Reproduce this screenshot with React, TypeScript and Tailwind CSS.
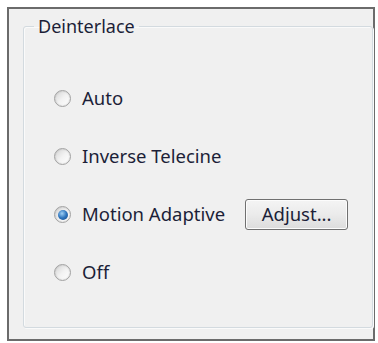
import React from "react";

function Radio({ checked }: { checked?: boolean }) {
  return (
    <div className="w-[17px] h-[17px] rounded-full border border-[#a2a2a2] bg-gradient-to-br from-[#d4d4d4] via-[#f2f2f2] to-[#ffffff] flex items-center justify-center shrink-0 shadow-[inset_0_0_2px_rgba(0,0,0,0.18)]">
      {checked && (
        <div className="w-[10px] h-[10px] rounded-full bg-[radial-gradient(circle_at_40%_35%,#9fd0f5_0%,#2d74bd_50%,#154785_100%)]" />
      )}
    </div>
  );
}

function Row({ label, checked, children }: { label: string; checked?: boolean; children?: React.ReactNode }) {
  return (
    <div className="h-[31px] flex items-center">
      <Radio checked={checked} />
      <span className="ml-[11px] text-[18.5px] text-[#1c1f38] leading-none">{label}</span>
      {children}
    </div>
  );
}

export default function App() {
  return (
    <div className="w-[378px] h-[343px] bg-white pt-[7px] pl-[7px]" style={{ fontFamily: '"Noto Sans", "Open Sans", sans-serif' }}>
      <div className="w-[368px] h-[334px] border-2 border-[#6b6b6b] bg-[#f0f0f0] pl-[14px] pt-[8px]">
        <fieldset className="h-[311px] border border-[#d3dadf] rounded-[3px] shadow-[inset_1px_1px_0_#fafafa,1px_1px_0_#fafafa]">
          <legend className="ml-[10px] px-[4px] text-[18px] text-[#1c1f38] leading-none">Deinterlace</legend>
          <div className="flex flex-col gap-[27px] pl-[30px] pt-[48px]">
            <Row label="Auto" />
            <Row label="Inverse Telecine" />
            <Row label="Motion Adaptive" checked>
              <button className="ml-[20px] w-[103px] h-[31px] rounded-[3px] border border-[#707070] bg-gradient-to-b from-[#f4f4f4] via-[#ebebeb] to-[#dcdcdc] text-[18.5px] text-[#1c1f38] leading-none shadow-[inset_0_0_0_1px_#fcfcfc]">
                Adjust...
              </button>
            </Row>
            <Row label="Off" />
          </div>
        </fieldset>
      </div>
    </div>
  );
}
